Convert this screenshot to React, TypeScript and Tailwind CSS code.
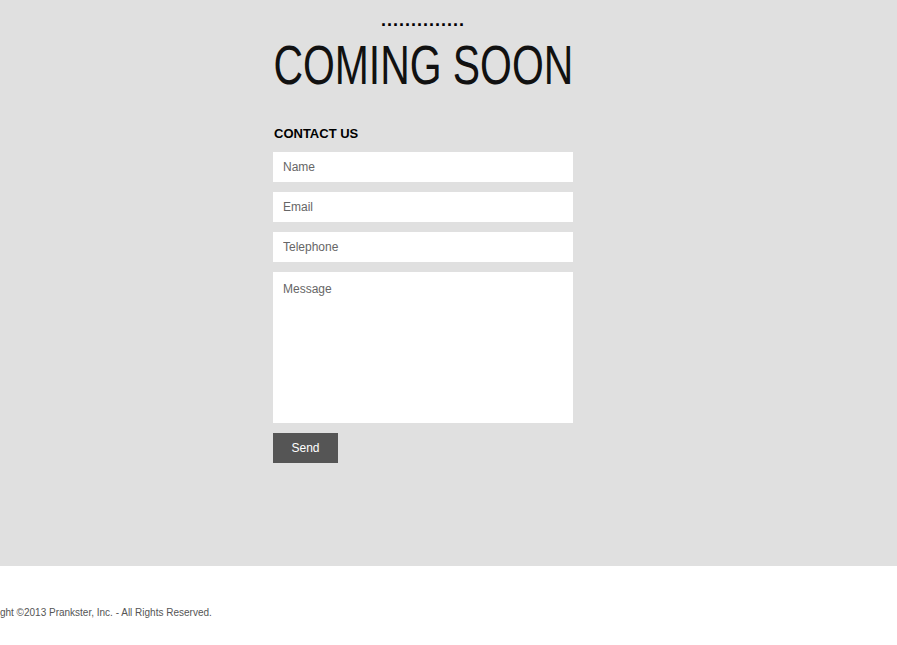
const fields = ["Name", "Email", "Telephone"];

export default function App() {
  return (
    <div className="w-[897px] h-[645px] overflow-hidden bg-white font-['Liberation_Sans',sans-serif]">
      <div className="h-[566px] bg-[#e0e0e0] pt-[14px]">
        <div className="ml-[273px] w-[300px] flex flex-col">
          <div className="text-center text-[18px] leading-[12px] tracking-[1px] text-black font-bold">..............</div>
          <div className="mt-[9px] flex justify-center">
            <h1 className="shrink-0 whitespace-nowrap text-[56px] leading-[60px] text-[#111] scale-x-[0.73]">
              COMING SOON
            </h1>
          </div>
          <h2 className="mt-[31px] ml-[1px] text-[13px] leading-[16px] font-bold text-black">CONTACT US</h2>
          <form className="mt-[10px] flex flex-col gap-[10px]" onSubmit={(e) => e.preventDefault()}>
            {fields.map((f) => (
              <input
                key={f}
                placeholder={f}
                className="h-[30px] w-full bg-white px-[10px] text-[12px] text-[#555] placeholder:text-[#666] outline-none"
              />
            ))}
            <textarea
              placeholder="Message"
              className="h-[151px] w-full resize-none bg-white px-[10px] py-[8px] text-[12px] text-[#555] placeholder:text-[#666] outline-none"
            />
            <button className="h-[30px] w-[65px] bg-[#555] text-[12px] text-white">Send</button>
          </form>
        </div>
      </div>
      <div className="pt-[39px] -ml-[29px] text-[10px] text-[#555] whitespace-nowrap">
        Copyright ©2013 Prankster, Inc. - All Rights Reserved.
      </div>
    </div>
  );
}
